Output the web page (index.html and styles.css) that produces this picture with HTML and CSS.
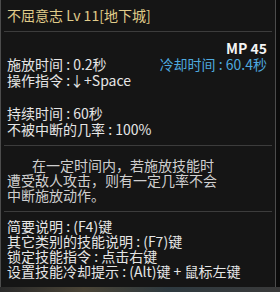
FILE: index.html
```html
<!DOCTYPE html>
<html>
<head>
	<meta charset="utf-8">
	<title>不屈意志</title>
	<link rel="stylesheet" href="styles.css">
</head>
<body>
<div class="tip">
	<div class="title">不屈意志 Lv 11[地下城]</div>
	<div class="sep"></div>
	<div class="stats">
		<div class="row mp">MP 45</div>
		<div class="row"><span>施放时间 : 0.2秒</span><span class="cd">冷却时间 : 60.4秒</span></div>
		<div class="row">操作指令 :↓+Space</div>
		<div class="gap"></div>
		<div class="row">持续时间 : 60秒</div>
		<div class="row">不被中断的几率 : 100%</div>
	</div>
	<div class="sep"></div>
	<p class="desc"><span class="indent"></span>在一定时间内，若施放技能时<br>遭受敌人攻击，则有一定几率不会<br>中断施放动作。</p>
	<div class="sep"></div>
	<ul class="help">
		<li>简要说明 : (F4)键</li>
		<li>其它类别的技能说明 : (F7)键</li>
		<li>锁定技能指令 : 点击右键</li>
		<li>设置技能冷却提示 : (Alt)键 + 鼠标左键</li>
	</ul>
</div>
<div class="dock"></div>
</body>
</html>
```

FILE: styles.css
```css
html,body{margin:0;padding:0;}
body{width:280px;height:292px;overflow:hidden;background:#0b0b0b;font:14px/16px "Noto Sans CJK SC","Liberation Sans",sans-serif;color:#e6e6e6;}
p,ul,li{margin:0;padding:0;}
ul{list-style-type:none;}
.tip{width:274px;height:287px;border-left:1px solid #4c4c4c;border-right:1px solid #4c4c4c;background:#151515;}
.title{height:31px;line-height:31px;padding-left:6px;color:#e0cc8a;}
.sep{height:1px;margin:0 3px;background:#3c3c3c;}
.stats{padding:8px 8px 8px 6px;}
.row{display:flex;justify-content:space-between;height:16px;}
.mp{justify-content:flex-end;color:#f4f4f4;font-weight:bold;}
.cd{color:#4ea9df;}
.gap{height:17px;}
.desc{padding:12px 6px 8px;line-height:15px;color:#cfcfcf;}
.indent{display:inline-block;width:25px;}
.help{padding:7px 6px 8px;line-height:15px;}
.dock{height:5px;background:linear-gradient(90deg,#2a2a2a,#4a4436 30%,#2e3a40 60%,#3a3a3a);}
```
